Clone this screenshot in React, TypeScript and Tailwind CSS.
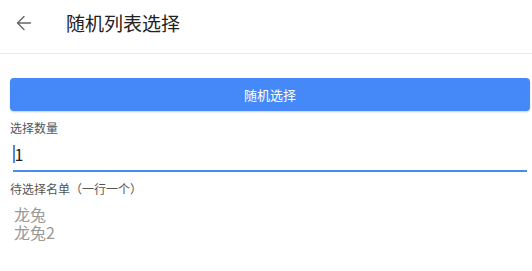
import { ArrowLeft } from 'lucide-react';

export default function App() {
  const font = { fontFamily: '"Noto Sans CJK SC", "Noto Sans", sans-serif' };

  return (
    <div className="w-[532px] h-[271px] bg-white overflow-hidden" style={font}>
      <div className="h-[54px] pb-[8px] flex items-center border-b border-[#ebebeb]">
        <ArrowLeft className="ml-[13px] w-[22px] h-[22px] text-[#666]" strokeWidth={1.5} />
        <span className="ml-[31px] text-[19px] text-[#222] leading-none">随机列表选择</span>
      </div>

      <div className="pl-[10px] pr-[2px] pt-[24px]">
        <button className="w-full h-[33px] rounded-[4px] bg-[#4589f9] text-white text-[13px] shadow-[0_1px_2px_rgba(0,0,0,0.2)]">
          随机选择
        </button>

        <div className="mt-[8px] text-[12px] text-[#555] leading-[18px]">选择数量</div>
        <div className="ml-[3px] mr-[3px] h-[35px] border-b-2 border-[#4a8ae8] flex items-center">
          <span className="w-[1.5px] h-[18px] bg-[#4a8ae8]"></span>
          <span className="text-[16px] text-[#222] leading-none">1</span>
        </div>

        <div className="mt-[8px] text-[12px] text-[#555] leading-[18px]">待选择名单（一行一个）</div>
        <div className="mt-[7px] ml-[4px] text-[16px] text-[#999] leading-[18px]">
          <div>龙兔</div>
          <div>龙兔2</div>
        </div>
      </div>
    </div>
  );
}
